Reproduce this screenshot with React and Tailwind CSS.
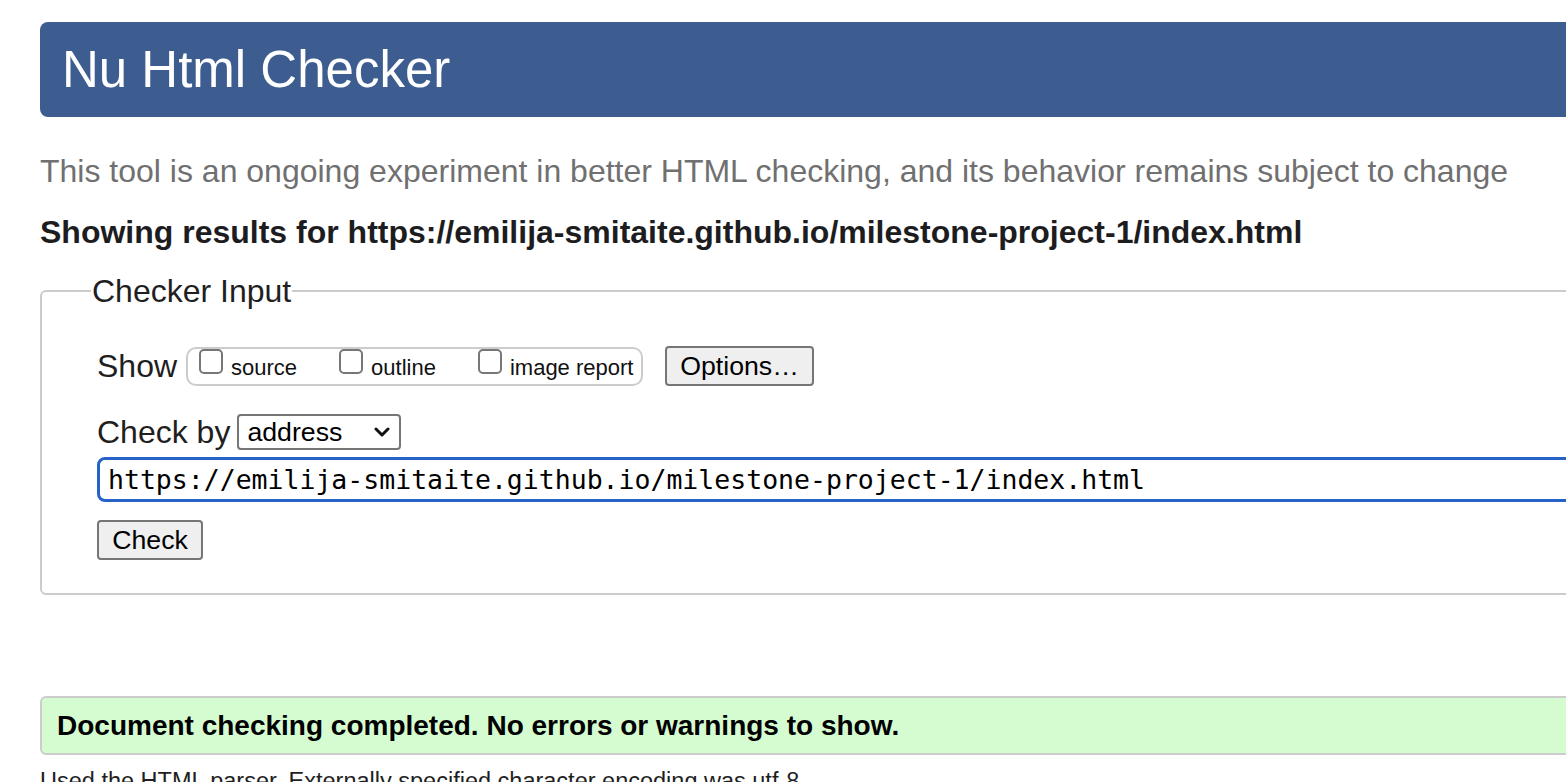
import { useState } from 'react'

const sans = { fontFamily: '"Liberation Sans", Arial, sans-serif' }

function Box({ label }) {
  return (
    <label className="flex items-start whitespace-nowrap">
      <span className="block shrink-0 w-[24px] h-[25px] border-2 border-[#777] rounded-[5px] bg-white" />
      <span className="ml-[8px] mt-[5px] text-[22px] leading-[28px] text-[#111]">{label}</span>
    </label>
  )
}

export default function App() {
  const [url, setUrl] = useState('https://emilija-smitaite.github.io/milestone-project-1/index.html')

  return (
    <div className="w-[1566px] h-[782px] overflow-hidden bg-white" style={sans}>
      <div className="w-[1700px] pt-[22px]">
        {/* Header */}
        <div className="ml-[40px] h-[95px] rounded-l-[8px] bg-[#3d5d91] flex items-center pl-[22px]">
          <h1 className="text-[51px] leading-none text-white">Nu Html Checker</h1>
        </div>

        <p className="ml-[40px] mt-[34px] text-[32px] leading-[40px] text-[#707070]">
          This tool is an ongoing experiment in better HTML checking, and its behavior remains subject to change
        </p>
        <p className="ml-[40px] mt-[22px] text-[32px] leading-[38px] font-bold text-[#1d1d1f]">
          Showing results for https://emilija-smitaite.github.io/milestone-project-1/index.html
        </p>

        {/* Checker Input */}
        <fieldset className="ml-[40px] mt-[22px] border-2 border-[#cccccc] rounded-[6px] pl-[49px] pb-[33px]">
          <legend className="px-[1px] text-[32px] leading-[36px] text-[#1f1f1f]">Checker Input</legend>
          <div className="pl-[6px] text-[#1f1f1f]">
            <div className="mt-[37px] flex items-center h-[40px]">
              <span className="text-[32px] leading-none">Show</span>
              <div className="ml-[9px] w-[457px] h-[39px] border-2 border-[#cccccc] rounded-[10px] flex items-start pl-[11px] gap-[42px]">
                <Box label="source" />
                <Box label="outline" />
                <Box label="image report" />
              </div>
              <button className="ml-[22px] h-[40px] w-[149px] border-2 border-[#767676] rounded-[4px] bg-[#efefef] text-[26.7px] leading-none text-black">
                Options…
              </button>
            </div>

            <div className="mt-[28px] flex items-center h-[36px]">
              <span className="text-[32px] leading-none">Check by</span>
              <div className="ml-[7px] w-[164px] h-[36px] border-2 border-[#767676] rounded-[4px] flex items-center pl-[8px] pr-[9px] justify-between bg-white">
                <span className="text-[26.7px] leading-none text-black">address</span>
                <svg width="16" height="12" viewBox="0 0 16 12">
                  <path d="M2 3 L8 9 L14 3" fill="none" stroke="#111" strokeWidth="3" strokeLinecap="round" strokeLinejoin="round" />
                </svg>
              </div>
            </div>

            <input
              value={url}
              onChange={e => setUrl(e.target.value)}
              className="mt-[7px] block w-[1600px] h-[45px] border-[3px] border-[#2563c9] rounded-[8px] pl-[8px] text-[26.5px] text-black outline-none"
              style={{ fontFamily: '"DejaVu Sans Mono", "Liberation Mono", monospace' }}
            />

            <button className="mt-[18px] block h-[40px] w-[106px] border-2 border-[#767676] rounded-[4px] bg-[#efefef] text-[26.7px] leading-none text-black">
              Check
            </button>
          </div>
        </fieldset>

        {/* Result */}
        <div className="ml-[40px] mt-[101px] h-[59px] border-2 border-[#cccccc] rounded-[6px] bg-[#d5fbd1] flex items-center pl-[15px]">
          <p className="text-[28px] font-bold text-black">Document checking completed. No errors or warnings to show.</p>
        </div>

        <p className="ml-[40px] mt-[11px] text-[23.5px] leading-[30px] text-[#1f1f1f]">
          Used the HTML parser. Externally specified character encoding was utf-8.
        </p>
      </div>
    </div>
  )
}
